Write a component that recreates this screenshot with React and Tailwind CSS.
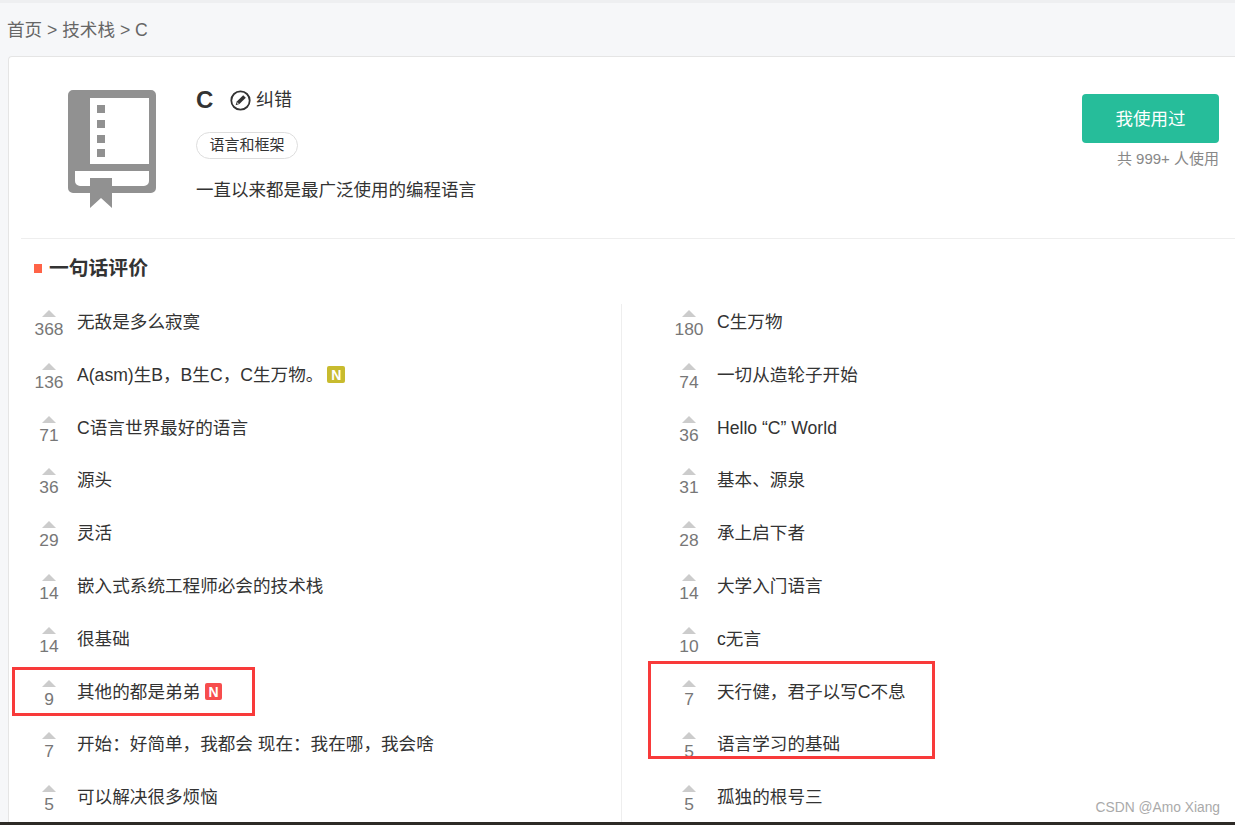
const leftRows = [
  { votes: 368, text: '无敌是多么寂寞' },
  { votes: 136, text: 'A(asm)生B，B生C，C生万物。', badge: 'yellow' },
  { votes: 71, text: 'C语言世界最好的语言' },
  { votes: 36, text: '源头' },
  { votes: 29, text: '灵活' },
  { votes: 14, text: '嵌入式系统工程师必会的技术栈' },
  { votes: 14, text: '很基础' },
  { votes: 9, text: '其他的都是弟弟', badge: 'red' },
  { votes: 7, text: '开始：好简单，我都会 现在：我在哪，我会啥' },
  { votes: 5, text: '可以解决很多烦恼' },
];

const rightRows = [
  { votes: 180, text: 'C生万物' },
  { votes: 74, text: '一切从造轮子开始' },
  { votes: 36, text: 'Hello “C” World' },
  { votes: 31, text: '基本、源泉' },
  { votes: 28, text: '承上启下者' },
  { votes: 14, text: '大学入门语言' },
  { votes: 10, text: 'c无言' },
  { votes: 7, text: '天行健，君子以写C不息' },
  { votes: 5, text: '语言学习的基础' },
  { votes: 5, text: '孤独的根号三' },
];

function BookIcon() {
  return (
    <svg width="88" height="118" viewBox="0 0 88 118" className="block">
      <path fill="#919191" fillRule="evenodd" d="M5 0h78a5 5 0 0 1 5 5v93a5 5 0 0 1-5 5H44v15l-11-10-11 10v-15H5a5 5 0 0 1-5-5V5a5 5 0 0 1 5-5zM22 8v66h59V8zM7 81v10a5 5 0 0 0 5 5h10v-8h22v8h32a5 5 0 0 0 5-5V81z" />
      <rect x="29" y="15" width="8" height="8" fill="#919191" />
      <rect x="29" y="30" width="8" height="8" fill="#919191" />
      <rect x="29" y="45" width="8" height="8" fill="#919191" />
      <rect x="29" y="59" width="8" height="8" fill="#919191" />
    </svg>
  );
}

function EditIcon() {
  return (
    <svg width="21" height="21" viewBox="0 0 21 21" className="block">
      <circle cx="10.5" cy="10.5" r="9.2" fill="#fff" stroke="#333" strokeWidth="1.8" />
      <path fill="#333" d="M13.2 5.2l2.6 2.6-6.4 6.2-3.8 1.2 1.2-3.8z" />
      <path fill="#fff" d="M7.6 12.2l1.2 1.2-1.7.5z" />
    </svg>
  );
}

function Row({ votes, text, badge }) {
  return (
    <div className="flex h-[52.8px]">
      <div className="flex w-[56px] shrink-0 flex-col items-center pt-[6px]">
        <div className="h-0 w-0 border-x-[7px] border-b-[7px] border-x-transparent border-b-[#cccccc]" />
        <div className="mt-[2px] text-[17.4px] leading-[20px] text-[#777777]">{votes}</div>
      </div>
      <div className="mt-[6px] flex h-[24px] items-center text-[17.6px] leading-[24px] text-[#333333]">
        <span>{text}</span>
        {badge === 'yellow' && (
          <span className="ml-[4px] flex h-[17px] w-[18px] items-center justify-center rounded-[2px] bg-[#c8bb2e] text-[14px] font-bold text-white">N</span>
        )}
        {badge === 'red' && (
          <span className="ml-[5px] flex h-[17px] w-[17px] items-center justify-center rounded-[2px] bg-[#f74d4d] text-[14px] font-bold text-white">N</span>
        )}
      </div>
    </div>
  );
}

export default function App() {
  return (
    <div className="relative flex h-[825px] w-[1235px] flex-col overflow-hidden bg-[#f6f7f9] font-['Liberation_Sans','Noto_Sans_CJK_SC',sans-serif]">
      <div className="h-[3px] bg-[#eeeff1]" />

      {/* Breadcrumb */}
      <div className="flex h-[53px] items-center pl-[7px] pt-[1px] text-[17.6px] text-[#666666]">首页 &gt; 技术栈 &gt; C</div>

      {/* Card */}
      <div className="ml-[8px] min-h-0 flex-1 overflow-hidden rounded-tl-[4px] border-t border-l border-[#e5e5e5] bg-white">
        <div className="ml-[12px] flex h-[182px] border-b border-[#eeeeee]">
          <div className="ml-[47px] mt-[33px] w-[128px] shrink-0">
            <BookIcon />
          </div>
          <div className="flex-1 pt-[31px]">
            <div className="flex h-[24px] items-center">
              <span className="w-[34px] text-[24px] font-bold leading-[24px] text-[#333333]">C</span>
              <EditIcon />
              <span className="ml-[5px] text-[18px] text-[#333333]">纠错</span>
            </div>
            <div className="mt-[20px] flex h-[27px] w-[102px] items-center justify-center rounded-full border border-[#dddddd] text-[15px] text-[#333333]">语言和框架</div>
            <div className="mt-[18px] text-[17.5px] leading-[26px] text-[#333333]">一直以来都是最广泛使用的编程语言</div>
          </div>
          <div className="mr-[16px] flex flex-col items-end pt-[37px]">
            <button className="h-[49px] w-[137px] rounded-[4px] bg-[#26bd9a] pt-[2px] text-[17.5px] text-white">我使用过</button>
            <div className="mt-[7px] text-[15px] leading-[18px] text-[#888888]">共 999+ 人使用</div>
          </div>
        </div>

        {/* One-line reviews */}
        <div className="ml-[12px]">
          <div className="flex h-[65px] items-center pb-[6px] pl-[13px]">
            <span className="h-[9px] w-[8px] bg-[#ff6347]" />
            <h2 className="ml-[7px] text-[19.8px] font-bold text-[#333333]">一句话评价</h2>
          </div>
          <div className="flex">
            <div className="w-[600px] shrink-0">
              {leftRows.map((row) => (
                <Row key={row.text} {...row} />
              ))}
            </div>
            <div className="flex-1 border-l border-[#eeeeee] pl-[39px]">
              {rightRows.map((row) => (
                <Row key={row.text} {...row} />
              ))}
            </div>
          </div>
        </div>
      </div>

      <div className="h-[3px] bg-[#2d2a26]" />

      {/* Annotations over the screenshot */}
      <div className="absolute left-[12px] top-[667px] h-[49px] w-[243px] border-[3px] border-[#f83a3a]" />
      <div className="absolute left-[648px] top-[661px] h-[98px] w-[287px] border-[3px] border-[#f83a3a]" />
      <div className="absolute right-[15px] top-[799px] text-[13.8px] leading-[18px] text-[#aaaaaa]">CSDN @Amo Xiang</div>
    </div>
  );
}
